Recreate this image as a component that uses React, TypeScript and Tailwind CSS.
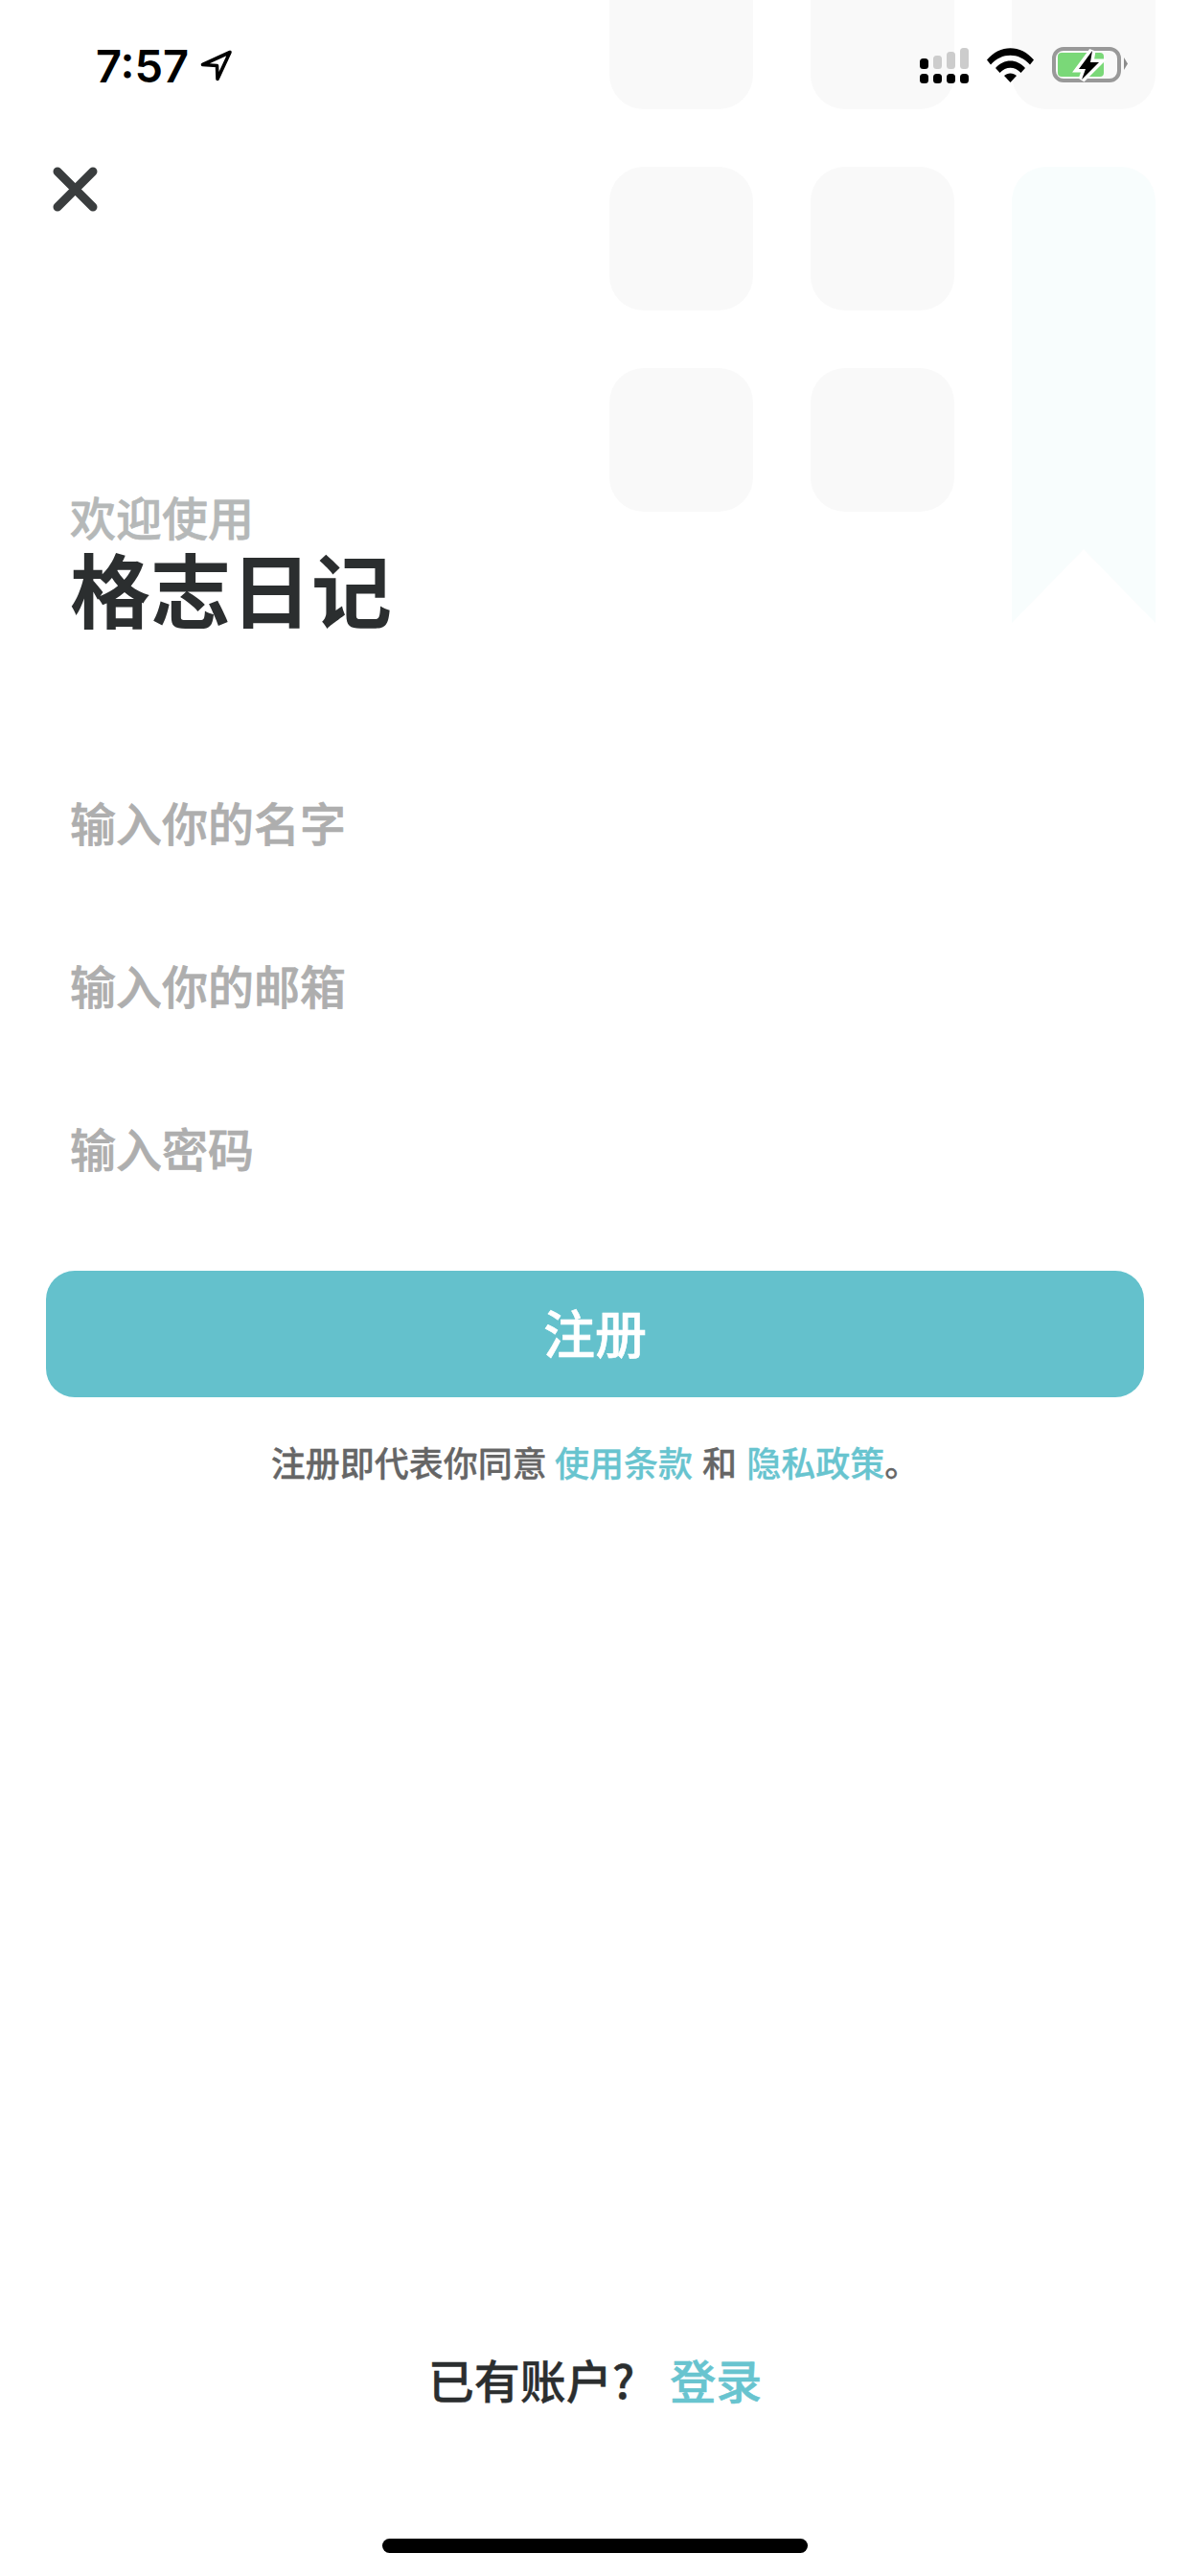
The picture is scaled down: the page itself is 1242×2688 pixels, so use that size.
import React from 'react';

const fields = ['输入你的名字', '输入你的邮箱', '输入密码'];

function Signal() {
  const grey = [56, 52, 48];
  return (
    <svg width="51" height="37" viewBox="960 48 51 37" className="block">
      <rect x="960" y="59" width="9" height="11" rx="3.5" fill="#000" />
      {grey.map((top, i) => (
        <rect key={i} x={974 + i * 14} y={top} width="9" height={70 - top} rx="3.5" fill="#ccc" />
      ))}
      {[0, 1, 2, 3].map((i) => (
        <rect key={i} x={960 + i * 14} y="75" width="9" height="10" rx="3.5" fill="#000" />
      ))}
    </svg>
  );
}

function Wifi() {
  return (
    <svg width="49" height="36" viewBox="0 0 49 36" className="block">
      <path d="M0 12.5C13.5 -4 35.5 -4 49 12.5L45 17.5C33.5 4.5 15.5 4.5 4 17.5Z" fill="#000" />
      <path d="M9 21C17.5 11 31.5 11 40 21L35.5 26C29 19 20 19 13.5 26Z" fill="#000" />
      <path d="M18 29C21.5 25.5 27.5 25.5 31 29L24.5 36Z" fill="#000" />
    </svg>
  );
}

function Battery() {
  const bolt = 'M42 4L28 23H35L31 34L49 16H40Z';
  return (
    <svg width="79" height="38" viewBox="0 0 79 38" className="block">
      <rect x="2" y="2" width="68" height="33" rx="10" fill="none" stroke="#999" strokeWidth="4" />
      <rect x="6" y="6" width="48" height="25" rx="4" fill="#7ad878" />
      <path d="M75 11L79 17.5L75 24Z" fill="#8c8c8c" />
      <path d={bolt} fill="#fff" stroke="#fff" strokeWidth="7" strokeLinejoin="miter" />
      <path d={bolt} fill="#000" />
    </svg>
  );
}

function Decoration() {
  return (
    <div className="absolute top-[-36px] left-[636px] grid grid-cols-[150px_150px_150px] grid-rows-[150px_150px_150px] gap-x-[60px] gap-y-[60px]">
      <div className="bg-[#f9f9f9] rounded-[36px]" />
      <div className="bg-[#f9f9f9] rounded-[36px]" />
      <div className="bg-[#f9f9f9] rounded-[36px]" />
      <div className="bg-[#f9f9f9] rounded-[36px]" />
      <div className="bg-[#f9f9f9] rounded-[36px]" />
      <svg width="150" height="476" viewBox="0 0 150 476" className="row-span-2 block">
        <path d="M0 36A36 36 0 0 1 36 0H114A36 36 0 0 1 150 36V476L75 399L0 476Z" fill="#f8fdfd" />
      </svg>
      <div className="bg-[#f9f9f9] rounded-[36px]" />
      <div className="bg-[#f9f9f9] rounded-[36px]" />
    </div>
  );
}

export default function App() {
  return (
    <div className="relative w-[1242px] h-[2688px] overflow-hidden bg-white flex flex-col font-['Noto_Sans_CJK_SC',sans-serif]">
      <Decoration />

      <div className="relative h-[136px] flex items-center justify-between pl-[100px] pr-[65px]">
        <div className="flex items-center gap-[12px]">
          <span className="font-['Inter',sans-serif] text-[47px] font-semibold leading-none text-black">7:57</span>
          <svg width="34" height="33" viewBox="0 0 34 33" className="block">
            <path d="M31 2.5L2.5 15.5L17.5 16.5L18 30.5Z" fill="none" stroke="#000" strokeWidth="3.6" strokeLinejoin="round" />
          </svg>
        </div>
        <div className="flex items-center gap-[19px]">
          <Signal />
          <Wifi />
          <Battery />
        </div>
      </div>

      <div className="relative mt-[38px] pl-[55px]">
        <svg width="47" height="47" viewBox="0 0 47 47" className="block">
          <path d="M5 5L42 42M42 5L5 42" fill="none" stroke="#3a3d3e" strokeWidth="9" strokeLinecap="round" />
        </svg>
      </div>

      <div className="relative mt-[289px] pl-[73px]">
        <div className="text-[48px] leading-[56px] font-medium text-[#b5b8b8] [-webkit-text-stroke-width:0.6px]">欢迎使用</div>
        <div className="text-[84px] leading-[94px] font-bold text-[#2b2e2f]">格志日记</div>
      </div>

      <div className="mt-[112px] pl-[73px] flex flex-col">
        {fields.map((field) => (
          <div key={field} className="h-[170px] flex items-center text-[48px] font-medium text-[#aeaeae] [-webkit-text-stroke-width:0.7px]">
            {field}
          </div>
        ))}
      </div>

      <div className="mt-[44px] mx-[48px] h-[132px] pb-[5px] rounded-[30px] bg-[#64c1cc] flex items-center justify-center text-[54px] font-medium text-white [-webkit-text-stroke-width:0.6px]">
        注册
      </div>

      <div className="mt-[42px] text-center text-[36px] leading-[50px] font-medium text-[#666666] [-webkit-text-stroke-width:0.3px]">
        注册即代表你同意 <span className="text-[#68c4cf]">使用条款</span> <span className="mx-[2px]">和</span> <span className="text-[#68c4cf]">隐私政策</span>。
      </div>

      <div className="mt-auto flex flex-col items-center">
        <div className="flex items-center gap-[37px] text-[48px] leading-[60px] font-medium">
          <span className="text-[#2b2e2f] [-webkit-text-stroke-width:0.4px]">已有账户?</span>
          <span className="text-[#68c4cf] [-webkit-text-stroke-width:0.6px]">登录</span>
        </div>
        <div className="mt-[137px] mb-[24px] w-[444px] h-[15px] rounded-full bg-black" />
      </div>
    </div>
  );
}
